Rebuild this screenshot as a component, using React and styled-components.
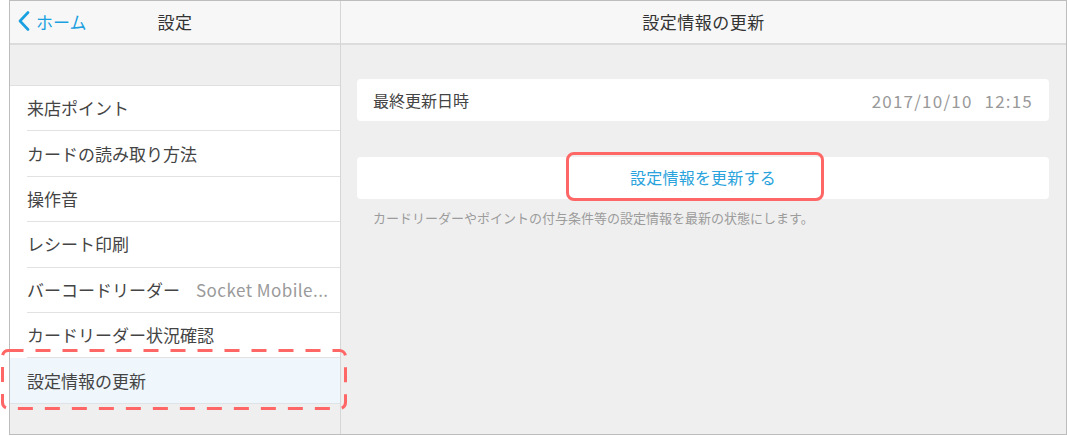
import React from "react";
import styled, { createGlobalStyle } from "styled-components";

const Global = createGlobalStyle`
  html, body { margin: 0; padding: 0; background: #ffffff; }
  body { font-family: "Noto Sans CJK JP", "Noto Sans", sans-serif; }
  * { box-sizing: border-box; }
`;

const Device = styled.div`
  position: relative;
  margin-left: 9px;
  width: 1058px;
  height: 435px;
  border: 1px solid #bdbdbd;
  display: grid;
  grid-template-columns: 330px 1px 1fr;
  background: #efefef;
`;

const Pane = styled.div`
  display: flex;
  flex-direction: column;
  min-width: 0;
  background: #efefef;
`;

const Divider = styled.div`
  background: #d6d6d6;
`;

const NavBar = styled.div`
  height: 44px;
  flex: none;
  background: #f7f7f7;
  border-bottom: 2px solid #dcdcdc;
  display: grid;
  grid-template-columns: 1fr auto 1fr;
  align-items: center;
  padding: 0 0 2px 0;
`;

const Title = styled.div`
  grid-column: 2;
  grid-row: 1;
  font-size: 17px;
  color: #333;
  letter-spacing: 0.5px;
`;

const Back = styled.div`
  grid-column: 1;
  grid-row: 1;
  display: flex;
  align-items: center;
  gap: 6px;
  margin-left: 8px;
  color: #1a9fe0;
  font-size: 17px;
  justify-self: start;
`;

const Spacer = styled.div`
  height: 41px;
  flex: none;
  border-bottom: 1px solid #e0e0e0;
`;

const List = styled.div`
  background: #ffffff;
  display: flex;
  flex-direction: column;
`;

const Row = styled.div`
  position: relative;
  height: 45.4px;
  flex: none;
  display: flex;
  align-items: center;
  justify-content: space-between;
  gap: 16px;
  margin-left: ${(p) => (p.$selected ? "0" : "17px")};
  padding: 0 14px 1px ${(p) => (p.$selected ? "17px" : "0")};
  border-bottom: 1px solid ${(p) => (p.$selected ? "#dde3e6" : "#e2e2e2")};
  background: ${(p) => (p.$selected ? "#eff7fc" : "#ffffff")};
  font-size: 17px;
  color: #444;
  white-space: nowrap;
`;

const RowLabel = styled.span`
  flex: none;
`;

const RowValue = styled.span`
  flex: none;
  color: #9a9a9a;
  font-size: 17px;
  letter-spacing: 0.45px;
`;

const DashedMark = styled.svg`
  position: absolute;
  left: -16px;
  top: -9px;
  width: 354px;
  height: 61px;
  overflow: visible;
  pointer-events: none;
`;

const Content = styled.div`
  padding: 34px 17px 0 16px;
  display: flex;
  flex-direction: column;
`;

const Card = styled.div`
  position: relative;
  height: 42px;
  background: #ffffff;
  border-radius: 4px;
  display: flex;
  align-items: center;
  justify-content: ${(p) => (p.$center ? "center" : "space-between")};
  padding: 0 16px;
  font-size: 16px;
  color: #444;
  margin-top: ${(p) => p.$gap || 0}px;
`;

const DateText = styled.span`
  color: #999;
  font-size: 17px;
  display: flex;
  gap: 12px;
  letter-spacing: 1.2px;
`;

const ActionText = styled.span`
  color: #2aa3dc;
  font-size: 16px;
  position: relative;
  top: -1px;
  letter-spacing: 0.2px;
`;

const ButtonMark = styled.div`
  position: absolute;
  left: 209px;
  top: -5px;
  width: 258px;
  height: 49px;
  border: 3px solid #ff6666;
  border-radius: 8px;
  pointer-events: none;
`;

const Caption = styled.p`
  margin: 9px 0 0 16px;
  font-size: 13px;
  color: #9c9c9c;
`;

const items = [
  { label: "来店ポイント" },
  { label: "カードの読み取り方法" },
  { label: "操作音" },
  { label: "レシート印刷" },
  { label: "バーコードリーダー", value: "Socket Mobile..." },
  { label: "カードリーダー状況確認" },
  { label: "設定情報の更新", selected: true },
];

export default function App() {
  return (
    <>
      <Global />
      <Device>
        <Pane>
          <NavBar>
            <Back>
              <svg width="12" height="20" viewBox="0 0 12 20" aria-hidden="true">
                <polyline
                  points="10,1.5 2,10 10,18.5"
                  fill="none"
                  stroke="#1a9fe0"
                  strokeWidth="2.6"
                  strokeLinecap="round"
                  strokeLinejoin="round"
                />
              </svg>
              <span>ホーム</span>
            </Back>
            <Title>設定</Title>
          </NavBar>
          <Spacer />
          <List>
            {items.map((it) => (
              <Row key={it.label} $selected={it.selected}>
                <RowLabel>{it.label}</RowLabel>
                {it.value && <RowValue>{it.value}</RowValue>}
                {it.selected && (
                  <DashedMark viewBox="0 0 354 61">
                    <rect
                      x="8.5"
                      y="1.5"
                      width="343"
                      height="58"
                      rx="6"
                      fill="none"
                      stroke="#ff6666"
                      strokeWidth="3"
                      strokeDasharray="15 12"
                    />
                  </DashedMark>
                )}
              </Row>
            ))}
          </List>
        </Pane>
        <Divider />
        <Pane>
          <NavBar>
            <Title>設定情報の更新</Title>
          </NavBar>
          <Content>
            <Card>
              <span>最終更新日時</span>
              <DateText>
                <span>2017/10/10</span>
                <span>12:15</span>
              </DateText>
            </Card>
            <Card $center $gap={36}>
              <ActionText>設定情報を更新する</ActionText>
              <ButtonMark />
            </Card>
            <Caption>カードリーダーやポイントの付与条件等の設定情報を最新の状態にします。</Caption>
          </Content>
        </Pane>
      </Device>
    </>
  );
}
